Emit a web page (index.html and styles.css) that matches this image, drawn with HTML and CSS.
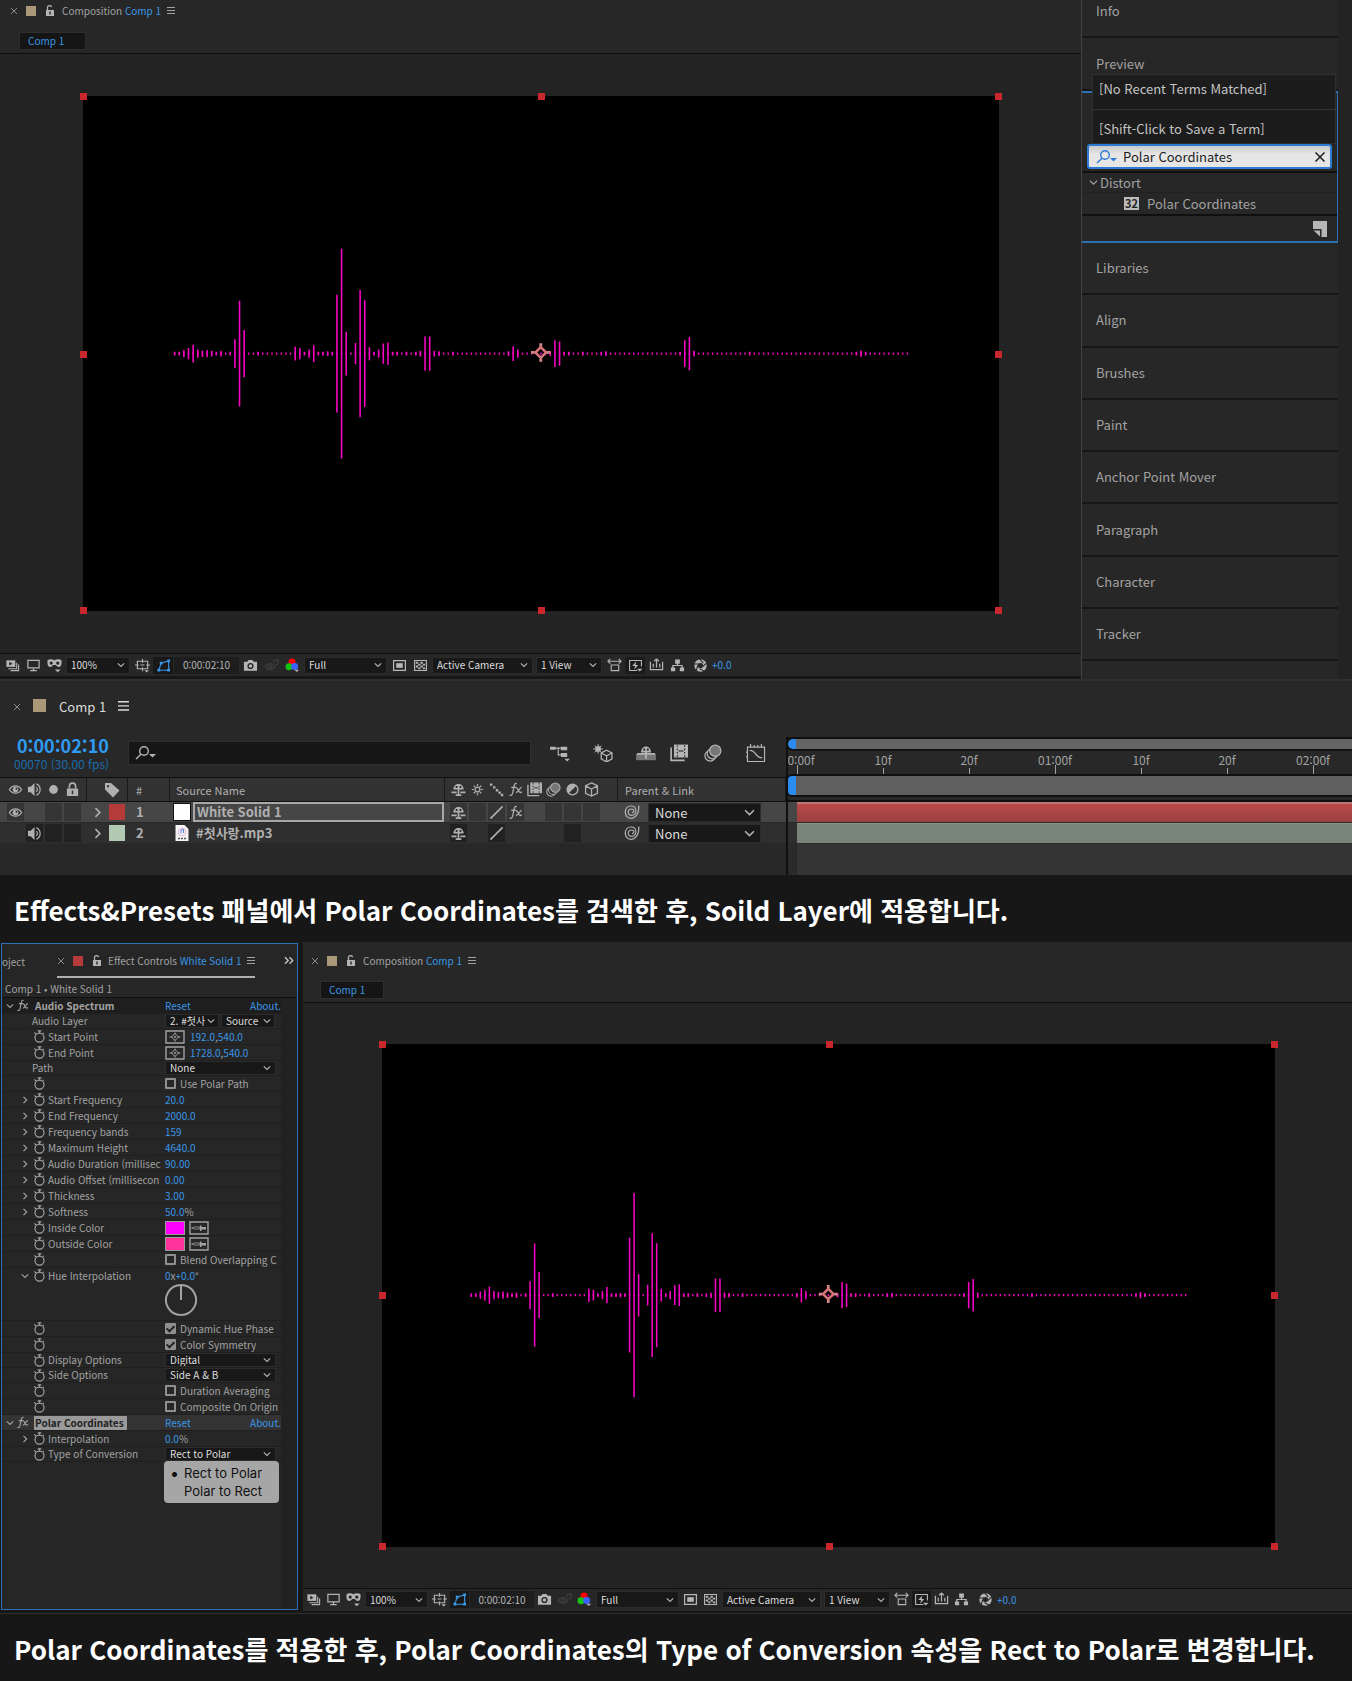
FILE: index.html
```html
<!DOCTYPE html>
<html lang="ko">
<head>
<meta charset="utf-8">
<meta name="viewport" content="width=device-width, initial-scale=1">
<title>Polar Coordinates</title>
<link rel="stylesheet" href="styles.css">
</head>
<body>
<svg class="sprite" aria-hidden="true">
  <symbol id="lock-open" viewBox="0 0 10 12"><path d="M2.500 5V3a2 2 0 0 1 4-.8" fill="none" stroke="currentColor" stroke-width="1.300"/><path fill="currentColor" fill-rule="evenodd" d="M1 5h8v6H1zM4.300 6.500v3h1.400v-3z"/></symbol>
  <symbol id="menu" viewBox="0 0 8 8"><path d="M0 .5h8M0 3.500h8M0 6.500h8" stroke="currentColor"/></symbol>
  <symbol id="close" viewBox="0 0 8 8"><path d="M1 1l6 6M7 1L1 7" stroke="currentColor" stroke-width="1"/></symbol>
  <symbol id="down" viewBox="0 0 8 8"><path d="M.8 2.300L4 5.500l3.200-3.200" fill="none" stroke="currentColor" stroke-width="1.100"/></symbol>
  <symbol id="right" viewBox="0 0 8 8"><path d="M2.500 .8L5.700 4 2.500 7.200" fill="none" stroke="currentColor" stroke-width="1.200"/></symbol>
  <symbol id="more" viewBox="0 0 10 8"><path d="M1 .8L4.200 4 1 7.200M5.500 .8L8.700 4 5.500 7.200" fill="none" stroke="currentColor" stroke-width="1.400"/></symbol>
  <symbol id="search" viewBox="0 0 22 16"><g fill="none" stroke="currentColor" stroke-width="1.400"><circle cx="9" cy="6" r="4.300"/><path d="M6 9.200L1 14"/></g><path d="M14 9h7l-3.500 3.600z" fill="currentColor"/></symbol>
  <symbol id="watch" viewBox="0 0 12 12"><circle cx="6" cy="7" r="4.200" fill="none" stroke="currentColor" stroke-width="1.100"/><path d="M4.300 .8h3.400M6 .8v2M1.200 2.200l1.600 1.600M10 2.600l-.8.8" stroke="currentColor" stroke-width="1.100"/></symbol>
  <symbol id="fx" viewBox="0 0 14 14"><path d="M8.200 1.600C6.600.9 6 2 5.700 3.600L4.400 10c-.4 2-1.200 2.800-2.900 2.200M3 5h4.600M7.500 5.200c1.800-.5 1.900 4.900 4 4.600.6 0 1-.3 1.300-.7M12.800 5c-1.800-.5-2.900 4.900-5.400 4.800" fill="none" stroke="currentColor" stroke-width="1.200"/></symbol>
  <symbol id="previews" viewBox="0 0 16 16"><path d="M1.500 2.500h9.500v7H1.500z" fill="currentColor"/><path d="M4.500 4l3.500 2-3.500 2z" fill="#232323"/><path d="M3.500 11.500h9V5M6 13.500h8.500V7" fill="none" stroke="currentColor" stroke-width="1.200"/></symbol>
  <symbol id="monitor" viewBox="0 0 16 16"><path d="M2 2.500h12v8H2zM8 10.500v2.500M4.500 13.500h7" fill="none" stroke="currentColor" stroke-width="1.300"/></symbol>
  <symbol id="mask" viewBox="0 0 16 16"><path d="M.8 2C3 1 6 1 8 2.500 10 1 13 1 15.200 2c.8 2 .3 5.500-1 7-1.400 1-3.600.6-4.700-1.500h-3C5.400 9.600 3.200 10 1.800 9 .5 7.500 0 4 .8 2z" fill="currentColor"/><circle cx="4.500" cy="5.400" r="1.700" fill="#232323"/><circle cx="11.500" cy="5.400" r="1.700" fill="#232323"/><path d="M8.500 12.300h6L11.500 15.300z" fill="currentColor"/></symbol>
  <symbol id="grid" viewBox="0 0 16 16"><path d="M2.500 3.500h11v8h-11zM8 1v4M8 7v1M8 10v4M0 7.500h4M12 7.500h4M6 7.500h4" fill="none" stroke="currentColor" stroke-width="1.200"/><path d="M10 13h5l-2.500 2.500z" fill="currentColor"/></symbol>
  <symbol id="shape" viewBox="0 0 16 16"><path d="M3 13L5.500 5.500 13.500 3v10z" fill="none" stroke="currentColor" stroke-width="1.200"/><path d="M1.500 11.500h3v3h-3zM4 4h3v3H4zM12 1.500h3v3h-3zM12 11.500h3v3h-3z" fill="currentColor"/></symbol>
  <symbol id="camera" viewBox="0 0 16 16"><path d="M1 4h3.500L6 2h4l1.500 2H15v9.500H1z" fill="currentColor"/><circle cx="8" cy="8.500" r="2.600" fill="none" stroke="#232323" stroke-width="1.400"/></symbol>
  <symbol id="show" viewBox="0 0 16 16"><g fill="none" stroke="currentColor" stroke-width="1.500"><path d="M1.500 9c2-4 8-4 10 0-2 4-8 4-10 0z"/><circle cx="6.500" cy="9" r="1.500"/><path d="M10 5l2-3h3v4l-2 2"/></g></symbol>
  <symbol id="rgb" viewBox="0 0 16 16"><circle cx="7.500" cy="4.200" r="3.700" fill="#f00"/><circle cx="4.300" cy="9.300" r="3.700" fill="#12c512"/><circle cx="10.300" cy="9" r="3.700" fill="#3b62ff"/><path d="M10 12.500h5L12.500 15z" fill="#b5b5b5"/></symbol>
  <symbol id="region" viewBox="0 0 16 16"><path d="M1.700 2.700h12.600v10.600H1.700z" fill="none" stroke="currentColor" stroke-width="1.300"/><path d="M4.500 5.500h7v5h-7z" fill="currentColor"/></symbol>
  <symbol id="alpha" viewBox="0 0 16 16"><path d="M1.700 2.700h12.600v10.600H1.700z" fill="none" stroke="currentColor" stroke-width="1.200"/><path d="M3 4h2.500v2H3zM8 4h2.500v2H8zM5.500 6H8v2H5.500zM10.500 6H13v2h-2.500zM3 8h2.500v2H3zM8 8h2.500v2H8zM5.500 10H8v2H5.500zM10.500 10H13v2h-2.500z" fill="currentColor"/></symbol>
  <symbol id="pixel" viewBox="0 0 16 16"><path d="M4.500 7.500h8v6h-8zM1 3.500h14M3.500 1L1 3.500 3.500 6M12.500 1L15 3.500 12.500 6" fill="none" stroke="currentColor" stroke-width="1.200"/></symbol>
  <symbol id="fast" viewBox="0 0 16 16"><path d="M10 13.300H1.700V2.700h12.600V9" fill="none" stroke="currentColor" stroke-width="1.200"/><path d="M9 3.500L4.500 8.500h3L6.500 12.500l4.500-5H8zM9.500 11.500h6L12.500 14.500z" fill="currentColor"/></symbol>
  <symbol id="tl" viewBox="0 0 16 16"><path d="M1.500 4v8.500h13V4M4.500 6v4M8 1v9M11.500 6v4M8 1L5.500 3.500M8 1l2.500 2.500" fill="none" stroke="currentColor" stroke-width="1.300"/></symbol>
  <symbol id="flow" viewBox="0 0 16 16"><path d="M5.500 1.500h5V6h-5zM1 10h4.500v4H1zM10.500 10H15v4h-4.500z" fill="currentColor"/><path d="M8 5v3M3 11V8h10v3" fill="none" stroke="currentColor" stroke-width="1.300"/></symbol>
  <symbol id="aperture" viewBox="0 0 16 16"><circle cx="8" cy="8" r="4.700" fill="none" stroke="currentColor" stroke-width="3.800"/><path d="M7 1l4 4.500M14.500 5.500l-4.500 4M12 14l-5-2.500M3.500 13.500L5 8M1 6.500h6" stroke="#232323" stroke-width="1.100"/></symbol>
  <symbol id="eye" viewBox="0 0 16 16"><path d="M1.500 8C4.500 2.700 11.500 2.700 14.500 8 11.500 13.300 4.500 13.300 1.500 8z" fill="none" stroke="currentColor" stroke-width="1.300"/><circle cx="8" cy="8" r="3" fill="currentColor"/><circle cx="9" cy="7.200" r="1" fill="#222"/></symbol>
  <symbol id="sound" viewBox="0 0 16 16"><path d="M1 5h3l4-4v14l-4-4H1z" fill="currentColor"/><path d="M10 5.500a3.500 3.500 0 0 1 0 5M10 2a6.500 6.500 0 0 1 0 12" fill="none" stroke="currentColor" stroke-width="1.300"/></symbol>
  <symbol id="dot" viewBox="0 0 16 16"><circle cx="8" cy="8" r="4.700" fill="currentColor"/></symbol>
  <symbol id="lock" viewBox="0 0 16 16"><path d="M4.700 7V4.500a3.300 3.300 0 0 1 6.600 0V7" fill="none" stroke="currentColor" stroke-width="1.700"/><path d="M2 7h12v8H2zM7.200 9v4h1.600V9z" fill="currentColor" fill-rule="evenodd"/></symbol>
  <symbol id="tag" viewBox="0 0 16 16"><path d="M1 1h6l8.500 7.500-6.500 7L1 7.500zM4 3a1.200 1.200 0 1 0 .1 0z" fill="currentColor" fill-rule="evenodd"/></symbol>
  <symbol id="shy" viewBox="0 0 16 16"><path d="M2.500 8C2.500 0 13.500 0 13.500 8z" fill="currentColor"/><path d="M5 4.200h2v2.200H5zM9 4.200h2v2.200H9z" fill="#2b2b2b"/><path d="M8 5v9M.5 11H6M10 11h5.500M5 14h6" stroke="currentColor" stroke-width="1.800"/></symbol>
  <symbol id="sun" viewBox="0 0 16 16"><circle cx="8" cy="8" r="2.500" fill="none" stroke="currentColor" stroke-width="1.300"/><path d="M8 2v2.500M8 11.500V14M2 8h2.500M11.500 8H14M4 4l1.500 1.500M10.500 10.500L12 12M12 4l-1.500 1.500M5.500 10.500L4 12" stroke="currentColor" stroke-width="1.300"/></symbol>
  <symbol id="quality" viewBox="0 0 16 16"><path d="M1 1.500h2.600v2.500H1zM4.300 4.500h2.600V7H4.300zM7.300 7.500h2.600V10H7.300zM10 10h2.600v2.500H10zM12.600 12.600h2.600v2.500h-2.600z" fill="currentColor"/></symbol>
  <symbol id="slash" viewBox="0 0 16 16"><path d="M1.500 14.500l13-13" stroke="currentColor" stroke-width="1.700"/></symbol>
  <symbol id="film" viewBox="0 0 16 16"><path d="M3.500 0.500H16V12H3.500z" fill="currentColor"/><path d="M6.500 1v10.500M13 1v10.500" stroke="#2b2b2b" stroke-dasharray="1.500 1.500"/><path d="M7.500 6.200h4.500" stroke="#2b2b2b"/><path d="M1 3v11.500h12" fill="none" stroke="currentColor" stroke-width="1.500"/></symbol>
  <symbol id="blur" viewBox="0 0 16 16"><g stroke="currentColor" stroke-width="1.100"><circle cx="5.500" cy="10.500" r="4.700" fill="#2b2b2b"/><circle cx="7.500" cy="8.500" r="4.700" fill="#2b2b2b"/><circle cx="10" cy="6" r="5" fill="#777"/></g></symbol>
  <symbol id="adjust" viewBox="0 0 16 16"><circle cx="8" cy="8" r="5.700" fill="none" stroke="currentColor" stroke-width="1.500"/><path d="M12.100 3.900A5.700 5.700 0 0 0 3.900 12.100z" fill="currentColor"/></symbol>
  <symbol id="cube" viewBox="0 0 16 16"><path d="M8 1l6.300 3v8L8 15l-6.300-3V4zM1.700 4.200L8 7.500l6.300-3.300M8 7.500V15" fill="none" stroke="currentColor" stroke-width="1.400"/></symbol>
  <symbol id="spiral" viewBox="0 0 16 16"><path d="M14.800 1.500c.5 8-3.300 12.800-8 12.800C-.5 14.300-.6 2 7 2c6.500 0 6.300 9.300.6 9.300-4.800 0-4.200-6.300 0-6.300 3.200 0 2.700 3.700.4 3.700" fill="none" stroke="currentColor" stroke-width="1.200"/></symbol>
  <symbol id="mini-flow" viewBox="0 0 22 20"><path d="M0 3h6v3.500H0zM12 3h7v4h-7zM12 10h7v4.500h-7zM16 16.500h6L19 19.500z" fill="currentColor"/><path d="M5 4.500h9M9 4.500V12h4" fill="none" stroke="currentColor" stroke-width="1.300"/></symbol>
  <symbol id="draft3d" viewBox="0 0 22 20"><path d="M15 7l6 3v6.500L15 20l-6-3.500V10zM9 10l6 3.200 6-3.200M15 13.200V20" fill="none" stroke="currentColor" stroke-width="1.400"/><circle cx="5.500" cy="5.500" r="3.200" fill="currentColor"/><path d="M5.500 0v11M0 5.500h11M1.700 1.700l7.600 7.600M9.300 1.700L1.700 9.300" stroke="currentColor"/></symbol>
  <symbol id="shy-all" viewBox="0 0 22 20"><path d="M0 11h22v7H0z" fill="#777"/><path d="M5.500 9.500C5.500 .5 16.500 .5 16.500 9.500z" fill="currentColor"/><path d="M8 5h2v2.500H8zM12 5h2v2.500h-2z" fill="#2b2b2b"/><path d="M11 8v8M1 11h20" stroke="currentColor" stroke-width="2"/></symbol>
  <symbol id="graph" viewBox="0 0 22 20"><path d="M1.500 3.500h19v16h-19zM5 3V0M9 3V1M13 3V1M17 3V0M0 9h2M0 14h2" fill="none" stroke="currentColor" stroke-width="1.300"/><path d="M4 7c8 0 5 8 14 8.500" fill="none" stroke="currentColor" stroke-width="1.500"/></symbol>
  <symbol id="target" viewBox="0 0 20 14"><path d="M1 1h18v12H1z" fill="none" stroke="currentColor" stroke-width="1.400"/><path d="M10 3.500L13.500 7 10 10.500 6.500 7zM10 2.500v2M10 9.500v2M4.500 7h3M12.500 7h3" fill="none" stroke="currentColor"/><circle cx="10" cy="7" r="1" fill="currentColor"/></symbol>
  <symbol id="dropper" viewBox="0 0 20 14"><path d="M1 1h18v12H1z" fill="none" stroke="currentColor" stroke-width="1.400"/><path d="M2.500 7L5 6h6v2H5z" fill="none" stroke="currentColor" stroke-width=".8"/><path d="M11 4.500h1.500V6H17v2.500h-4.500V10H11z" fill="currentColor"/></symbol>
  <symbol id="note" viewBox="0 0 16 16"><path d="M1 0h14v16h-5.500v-8H1z" fill="currentColor"/><path d="M1.500 9.500h6.500v6z" fill="currentColor"/></symbol>
  <symbol id="mp3" viewBox="0 0 14 16"><path d="M.5 0h9L13.500 4v12H.5z" fill="#f4f4f4"/><circle cx="7" cy="7" r="3.800" fill="none" stroke="#e3a3d8" stroke-width=".8"/><path d="M6 8.500V5l2.500-.5v3.500" fill="none" stroke="#5b7fe0"/><path d="M3 13.500h8" stroke="#555" stroke-width="1.500" stroke-dasharray="2 1"/></symbol>
  <symbol id="spectrum" viewBox="0 0 1975 1111">
    <g transform="translate(197.500 555.500)" fill="none" stroke="#f704c4">
      <path d="M-1.500 0H1582" stroke-width="5" stroke-dasharray="3 7"/>
      <path stroke-width="3.400" d="M0-4V4M10-4V4M20-8V8M30-12V12M40-19V19M50-9V9M60-7V7M70-8V8M80-6V6M90-4V4M100-6V6M120-4V4M130-31V31M140-114V114M150-51V51M180-4V4M260-15V15M270-12V12M280-4V4M290-9V9M300-18V18M310-4V4M320-4V4M330-5V5M340-4V4M350-127V127M360-226V226M370-47V47M390-23V23M400-137V137M410-115V115M420-14V14M430-4V4M440-9V9M450-22V22M460-24V24M470-4V4M480-4V4M500-4V4M520-4V4M530-6V6M540-37V37M550-37V37M560-6V6M570-5V5M600-4V4M720-5V5M730-16V16M740-9V9M810-5V5M820-29V29M830-26V26M840-4V4M850-4V4M880-4V4M920-4V4M930-5V5M1090-4V4M1100-29V29M1110-36V36M1120-6V6M1240-4V4M1470-4V4M1480-7V7M1490-4V4"/>
    </g>
    <g transform="translate(987 553)" fill="none" stroke="#d8747a"><path d="M0-11.500L11.500 0 0 11.500-11.500 0z" stroke-width="5.500"/><path d="M0-13v-7M0 13v7M-13 0h-8M13 0h8" stroke="#cf8a88" stroke-width="6"/></g>
  </symbol>
</svg>

<div class="workspace">
  <section class="comp">
    <header class="comp-head">
      <div class="tabline"><svg class="i8 dim"><use href="#close"/></svg><span class="chip sand"></span><svg class="i-lock"><use href="#lock-open"/></svg><h2>Composition <b>Comp 1</b></h2><svg class="i8"><use href="#menu"/></svg></div>
      <a class="crumb" href="#comp">Comp 1</a>
    </header>
    <div class="viewer"><div class="canvas"><svg viewBox="0 0 1975 1111" role="img" aria-label="Audio spectrum"><use href="#spectrum"/></svg><i class="h tl"></i><i class="h tc"></i><i class="h tr"></i><i class="h ml"></i><i class="h mr"></i><i class="h bl"></i><i class="h bc"></i><i class="h br"></i></div></div>
    <div class="toolbar">
      <button aria-label="Always preview"><svg><use href="#previews"/></svg></button><button aria-label="Primary viewer"><svg><use href="#monitor"/></svg></button><button aria-label="Mask view"><svg><use href="#mask"/></svg></button>
      <span class="sel zoom"><select aria-label="Magnification"><option>100%</option></select><svg><use href="#down"/></svg></span>
      <button aria-label="Grid and guides"><svg><use href="#grid"/></svg></button><button class="on" aria-label="Mask and shape path"><svg><use href="#shape"/></svg></button>
      <button class="time">0:00:02:10</button>
      <button aria-label="Take snapshot"><svg><use href="#camera"/></svg></button><button class="off" aria-label="Show snapshot"><svg><use href="#show"/></svg></button><button aria-label="Channels"><svg><use href="#rgb"/></svg></button>
      <span class="sel res"><select aria-label="Resolution"><option>Full</option></select><svg><use href="#down"/></svg></span>
      <button aria-label="Region of interest"><svg><use href="#region"/></svg></button><button aria-label="Transparency grid"><svg><use href="#alpha"/></svg></button>
      <span class="sel cam"><select aria-label="3D view"><option>Active Camera</option></select><svg><use href="#down"/></svg></span>
      <span class="sel views"><select aria-label="View layout"><option>1 View</option></select><svg><use href="#down"/></svg></span>
      <button aria-label="Pixel aspect"><svg><use href="#pixel"/></svg></button><button class="shade" aria-label="Fast previews"><svg><use href="#fast"/></svg></button><button aria-label="Timeline"><svg><use href="#tl"/></svg></button><button aria-label="Flowchart"><svg><use href="#flow"/></svg></button>
      <button class="expo" aria-label="Reset exposure"><svg><use href="#aperture"/></svg></button><button class="val">+0.0</button>
    </div>
  </section>

  <aside class="side">
    <h3 class="s-info">Info</h3>
    <h3 class="s-preview">Preview</h3>
    <div class="effects">
      <ul class="recent"><li>[No Recent Terms Matched]</li><li>[Shift-Click to Save a Term]</li></ul>
      <div class="find"><svg class="i-search"><use href="#search"/></svg><input aria-label="Search effects" value="Polar Coordinates"><button aria-label="Clear"><svg><use href="#close"/></svg></button></div>
      <div class="tree">
        <div class="group"><svg><use href="#down"/></svg>Distort</div>
        <div class="leaf"><span class="bits">32</span>Polar Coordinates</div>
      </div>
      <div class="foot"><button aria-label="New preset"><svg><use href="#note"/></svg></button></div>
    </div>
    <div class="panels"><h3>Libraries</h3><h3>Align</h3><h3>Brushes</h3><h3>Paint</h3><h3>Anchor Point Mover</h3><h3>Paragraph</h3><h3>Character</h3><h3>Tracker</h3></div>
  </aside>
</div>

<section class="timeline">
  <div class="tl-tab"><svg class="i8 dim"><use href="#close"/></svg><span class="chip sand"></span><h2>Comp 1</h2><svg class="i-menu"><use href="#menu"/></svg></div>
  <div class="tl-left">
    <div class="tl-ctrl">
      <div class="clock"><strong>0:00:02:10</strong><span>00070 (30.00 fps)</span></div>
      <label class="tl-find"><svg class="i-search"><use href="#search"/></svg><input aria-label="Search layers"></label>
      <div class="tl-tools">
        <button aria-label="Mini-flowchart"><svg><use href="#mini-flow"/></svg></button><button aria-label="Draft 3D"><svg><use href="#draft3d"/></svg></button><button aria-label="Hide shy layers"><svg><use href="#shy-all"/></svg></button><button class="slim" aria-label="Frame blending"><svg><use href="#film"/></svg></button><button aria-label="Motion blur"><svg><use href="#blur"/></svg></button><button aria-label="Graph editor"><svg><use href="#graph"/></svg></button>
      </div>
    </div>
    <table class="layers">
      <colgroup><col class="c-av"><col class="c-tag"><col class="c-num"><col class="c-name"><col class="c-sw"><col class="c-par"></colgroup>
      <thead><tr>
        <th><div class="cells av"><i><svg><use href="#eye"/></svg></i><i><svg><use href="#sound"/></svg></i><i><svg><use href="#dot"/></svg></i><i><svg><use href="#lock"/></svg></i></div></th>
        <th><div class="tagcell"><svg><use href="#tag"/></svg></div></th>
        <th class="num">#</th>
        <th>Source Name</th>
        <th><div class="cells sw"><i><svg><use href="#shy"/></svg></i><i><svg><use href="#sun"/></svg></i><i><svg><use href="#quality"/></svg></i><i><svg><use href="#fx"/></svg></i><i><svg><use href="#film"/></svg></i><i><svg><use href="#blur"/></svg></i><i><svg><use href="#adjust"/></svg></i><i><svg><use href="#cube"/></svg></i></div></th>
        <th class="par">Parent &amp; Link</th>
      </tr></thead>
      <tbody>
        <tr class="picked">
          <td><div class="cells av"><i class="d"><svg><use href="#eye"/></svg></i><i></i><i class="d"></i><i class="d"></i></div></td>
          <td><div class="tagcell"><svg class="arrow"><use href="#right"/></svg><span class="swatch red"></span></div></td>
          <td class="num">1</td>
          <td><div class="name"><span class="solid"></span><span class="edit">White Solid 1</span></div></td>
          <td><div class="cells sw"><i class="d"><svg><use href="#shy"/></svg></i><i class="d"></i><i class="d"><svg><use href="#slash"/></svg></i><i class="d"><svg><use href="#fx"/></svg></i><i></i><i class="d"></i><i class="d"></i><i class="d"></i></div></td>
          <td><div class="link"><svg><use href="#spiral"/></svg><span class="sel"><select aria-label="Parent of layer 1"><option>None</option></select><svg><use href="#down"/></svg></span></div></td>
        </tr>
        <tr>
          <td><div class="cells av"><i></i><i class="d"><svg><use href="#sound"/></svg></i><i class="d"></i><i class="d"></i></div></td>
          <td><div class="tagcell"><svg class="arrow"><use href="#right"/></svg><span class="swatch mint"></span></div></td>
          <td class="num">2</td>
          <td><div class="name"><svg><use href="#mp3"/></svg><span>#첫사랑.mp3</span></div></td>
          <td><div class="cells sw"><i class="d"><svg><use href="#shy"/></svg></i><i></i><i class="d"><svg><use href="#slash"/></svg></i><i></i><i></i><i></i><i class="d"></i><i></i></div></td>
          <td><div class="link"><svg><use href="#spiral"/></svg><span class="sel"><select aria-label="Parent of layer 2"><option>None</option></select><svg><use href="#down"/></svg></span></div></td>
        </tr>
      </tbody>
    </table>
  </div>
  <div class="tl-right">
    <div class="bar nav"></div>
    <ol class="ruler"><li class="long start">0:00f</li><li>10f</li><li>20f</li><li class="long">01:00f</li><li>10f</li><li>20f</li><li class="long">02:00f</li></ol>
    <div class="bar work"></div>
    <div class="track first"><span class="clip red"></span></div>
    <div class="track"><span class="clip mint"></span></div>
    <div class="track rest"><span></span></div>
  </div>
</section>

<p class="caption">Effects&amp;Presets 패널에서 Polar Coordinates를 검색한 후, Soild Layer에 적용합니다.</p>

<div class="workspace lower">
  <section class="fx-panel">
    <div class="fx-tabs"><h2 class="cut">oject</h2><div class="fx-tab"><svg class="i8 dim"><use href="#close"/></svg><span class="chip red"></span><svg class="i-lock"><use href="#lock-open"/></svg><h2>Effect Controls <b>White Solid 1</b></h2><svg class="i8"><use href="#menu"/></svg></div><svg class="more"><use href="#more"/></svg></div>
    <div class="fx-path">Comp 1 • White Solid 1</div>
    <div class="fx-list">
      <div class="row head"><svg class="fold"><use href="#down"/></svg><svg class="fxi"><use href="#fx"/></svg><h3>Audio Spectrum</h3><div class="v"><a href="#reset">Reset</a><a class="about" href="#about">About.</a></div></div>
      <div class="row drop plain"><label for="al">Audio Layer</label><div class="v"><span class="sel half"><select id="al"><option>2. #첫사</option></select><svg><use href="#down"/></svg></span><span class="sel half"><select aria-label="Audio source"><option>Source</option></select><svg><use href="#down"/></svg></span></div></div>
      <div class="row"><svg class="watch"><use href="#watch"/></svg><span class="l">Start Point</span><div class="v"><svg class="box"><use href="#target"/></svg><a href="#v">192.0</a>,<a href="#v">540.0</a></div></div>
      <div class="row"><svg class="watch"><use href="#watch"/></svg><span class="l">End Point</span><div class="v"><svg class="box"><use href="#target"/></svg><a href="#v">1728.0</a>,<a href="#v">540.0</a></div></div>
      <div class="row drop plain"><label for="pa">Path</label><div class="v"><span class="sel"><select id="pa"><option>None</option></select><svg><use href="#down"/></svg></span></div></div>
      <div class="row"><svg class="watch"><use href="#watch"/></svg><label class="v"><input type="checkbox">Use Polar Path</label></div>
      <div class="row"><svg class="fold"><use href="#right"/></svg><svg class="watch"><use href="#watch"/></svg><span class="l">Start Frequency</span><div class="v"><a href="#v">20.0</a></div></div>
      <div class="row"><svg class="fold"><use href="#right"/></svg><svg class="watch"><use href="#watch"/></svg><span class="l">End Frequency</span><div class="v"><a href="#v">2000.0</a></div></div>
      <div class="row"><svg class="fold"><use href="#right"/></svg><svg class="watch"><use href="#watch"/></svg><span class="l">Frequency bands</span><div class="v"><a href="#v">159</a></div></div>
      <div class="row"><svg class="fold"><use href="#right"/></svg><svg class="watch"><use href="#watch"/></svg><span class="l">Maximum Height</span><div class="v"><a href="#v">4640.0</a></div></div>
      <div class="row"><svg class="fold"><use href="#right"/></svg><svg class="watch"><use href="#watch"/></svg><span class="l">Audio Duration (millisec</span><div class="v"><a href="#v">90.00</a></div></div>
      <div class="row"><svg class="fold"><use href="#right"/></svg><svg class="watch"><use href="#watch"/></svg><span class="l">Audio Offset (millisecon</span><div class="v"><a href="#v">0.00</a></div></div>
      <div class="row"><svg class="fold"><use href="#right"/></svg><svg class="watch"><use href="#watch"/></svg><span class="l">Thickness</span><div class="v"><a href="#v">3.00</a></div></div>
      <div class="row"><svg class="fold"><use href="#right"/></svg><svg class="watch"><use href="#watch"/></svg><span class="l">Softness</span><div class="v"><a href="#v">50.0</a>%</div></div>
      <div class="row"><svg class="watch"><use href="#watch"/></svg><span class="l">Inside Color</span><div class="v"><span class="color magenta"></span><svg class="box"><use href="#dropper"/></svg></div></div>
      <div class="row"><svg class="watch"><use href="#watch"/></svg><span class="l">Outside Color</span><div class="v"><span class="color pink"></span><svg class="box"><use href="#dropper"/></svg></div></div>
      <div class="row"><svg class="watch"><use href="#watch"/></svg><label class="v"><input type="checkbox">Blend Overlapping C</label></div>
      <div class="row open"><svg class="fold"><use href="#down"/></svg><svg class="watch"><use href="#watch"/></svg><span class="l">Hue Interpolation</span><div class="v"><a href="#v">0</a>x<a href="#v">+0.0</a>°</div></div>
      <div class="row dial"><div class="v"><svg viewBox="0 0 32 32"><path d="M16 1a15 15 0 1 0 .01 0zM16 2v14" fill="none" stroke="currentColor" stroke-width="2"/></svg></div></div>
      <div class="row"><svg class="watch"><use href="#watch"/></svg><label class="v"><input type="checkbox" checked>Dynamic Hue Phase</label></div>
      <div class="row"><svg class="watch"><use href="#watch"/></svg><label class="v"><input type="checkbox" checked>Color Symmetry</label></div>
      <div class="row drop"><svg class="watch"><use href="#watch"/></svg><label class="l" for="do">Display Options</label><div class="v"><span class="sel"><select id="do"><option>Digital</option></select><svg><use href="#down"/></svg></span></div></div>
      <div class="row drop"><svg class="watch"><use href="#watch"/></svg><label class="l" for="so">Side Options</label><div class="v"><span class="sel"><select id="so"><option>Side A &amp; B</option></select><svg><use href="#down"/></svg></span></div></div>
      <div class="row"><svg class="watch"><use href="#watch"/></svg><label class="v"><input type="checkbox">Duration Averaging</label></div>
      <div class="row"><svg class="watch"><use href="#watch"/></svg><label class="v"><input type="checkbox">Composite On Origin</label></div>
      <div class="row head picked"><svg class="fold"><use href="#down"/></svg><svg class="fxi"><use href="#fx"/></svg><h3>Polar Coordinates</h3><div class="v"><a href="#reset">Reset</a><a class="about" href="#about">About.</a></div></div>
      <div class="row"><svg class="fold"><use href="#right"/></svg><svg class="watch"><use href="#watch"/></svg><span class="l">Interpolation</span><div class="v"><a href="#v">0.0</a>%</div></div>
      <div class="row drop menu-host"><svg class="watch"><use href="#watch"/></svg><label class="l" for="tc">Type of Conversion</label><div class="v"><span class="sel"><select id="tc"><option>Rect to Polar</option></select><svg><use href="#down"/></svg></span></div>
        <ul class="menu"><li class="cur">Rect to Polar</li><li>Polar to Rect</li></ul></div>
    </div>
  </section>

  <section class="comp small">
    <header class="comp-head">
      <div class="tabline"><svg class="i8 dim"><use href="#close"/></svg><span class="chip sand"></span><svg class="i-lock"><use href="#lock-open"/></svg><h2>Composition <b>Comp 1</b></h2><svg class="i8"><use href="#menu"/></svg></div>
      <a class="crumb" href="#comp">Comp 1</a>
    </header>
    <div class="viewer"><div class="canvas"><svg viewBox="0 0 1975 1111" role="img" aria-label="Audio spectrum"><use href="#spectrum"/></svg><i class="h tl"></i><i class="h tc"></i><i class="h tr"></i><i class="h ml"></i><i class="h mr"></i><i class="h bl"></i><i class="h bc"></i><i class="h br"></i></div></div>
    <div class="toolbar">
      <button aria-label="Always preview"><svg><use href="#previews"/></svg></button><button aria-label="Primary viewer"><svg><use href="#monitor"/></svg></button><button aria-label="Mask view"><svg><use href="#mask"/></svg></button>
      <span class="sel zoom"><select aria-label="Magnification"><option>100%</option></select><svg><use href="#down"/></svg></span>
      <button aria-label="Grid and guides"><svg><use href="#grid"/></svg></button><button class="on" aria-label="Mask and shape path"><svg><use href="#shape"/></svg></button>
      <button class="time">0:00:02:10</button>
      <button aria-label="Take snapshot"><svg><use href="#camera"/></svg></button><button class="off" aria-label="Show snapshot"><svg><use href="#show"/></svg></button><button aria-label="Channels"><svg><use href="#rgb"/></svg></button>
      <span class="sel res"><select aria-label="Resolution"><option>Full</option></select><svg><use href="#down"/></svg></span>
      <button aria-label="Region of interest"><svg><use href="#region"/></svg></button><button aria-label="Transparency grid"><svg><use href="#alpha"/></svg></button>
      <span class="sel cam"><select aria-label="3D view"><option>Active Camera</option></select><svg><use href="#down"/></svg></span>
      <span class="sel views"><select aria-label="View layout"><option>1 View</option></select><svg><use href="#down"/></svg></span>
      <button aria-label="Pixel aspect"><svg><use href="#pixel"/></svg></button><button class="shade" aria-label="Fast previews"><svg><use href="#fast"/></svg></button><button aria-label="Timeline"><svg><use href="#tl"/></svg></button><button aria-label="Flowchart"><svg><use href="#flow"/></svg></button>
      <button class="expo" aria-label="Reset exposure"><svg><use href="#aperture"/></svg></button><button class="val">+0.0</button>
    </div>
  </section>
</div>

<p class="caption last">Polar Coordinates를 적용한 후, Polar Coordinates의 Type of Conversion 속성을 Rect to Polar로 변경합니다.</p>
</body>
</html>
```
FILE: styles.css
```css
* { box-sizing: border-box; }

:root {
  --panel: #272727;
  --view: #232323;
  --line: #0f0f0f;
  --field: #181818;
  --text: #a2a2a2;
  --bright: #dcdcdc;
  --blue: #3a97e6;
  --focus: #2c6fb3;
}

body {
  margin: 0;
  background: #171717;
  color: var(--text);
  font: 10px/14px "Noto Sans CJK KR", "Noto Sans", sans-serif;
}

h2, h3, p, ul, ol { margin: 0; padding: 0; list-style: none; font: inherit; }
a { color: var(--blue); text-decoration: none; }
button, input, select { font: inherit; color: inherit; border: 0; padding: 0; margin: 0; background: none; outline: 0; }
select { appearance: none; width: 100%; }
svg { display: block; flex: none; }
.sprite { position: absolute; width: 0; height: 0; }

.i8 { width: 8px; height: 8px; }
.dim { color: #8a8a8a; }
.i-lock { width: 10px; height: 12px; color: #b4b4b4; }
.i-search { width: 22px; height: 16px; }
.i-menu { width: 11px; height: 11px; }
.chip { width: 10px; height: 10px; flex: none; }
.sand { background: #ab9878; }
.red { background: #b53a3a; }
.mint { background: #b3c9b4; }

/* drop-down: select and chevron share one grid cell */
.sel { display: grid; align-items: center; background: var(--field); border: 1px solid #2c2c2c; color: var(--bright); }
.sel > * { grid-area: 1 / 1; }
.sel > svg { justify-self: end; width: 8px; height: 8px; margin-right: 4px; pointer-events: none; color: #b5b5b5; }
.sel > select { padding: 0 14px 0 4px; }

/* workspace */
.workspace { display: flex; background: var(--view); }
.comp { flex: 1; min-width: 0; background: var(--view); border-bottom: 3px solid #171717; }
.comp-head { background: var(--panel); border-bottom: 1px solid var(--line); padding: 0 0 4px 10px; }
.tabline { display: flex; align-items: center; height: 22px; margin-bottom: 11px; }
.tabline .chip { margin: 0 9px 0 8px; }
.tabline .i-lock { margin-right: 7px; }
.tabline h2 { margin-right: 6px; }
h2 b { font-weight: inherit; color: var(--blue); }
.crumb { display: block; width: 65px; height: 16px; margin-left: 10px; padding-left: 8px; background: #151515; outline: 1px solid #2e2e2e; line-height: 16px; }
.viewer { padding: 42px 82px 42px 83px; }
.canvas { position: relative; background: #000; }
.canvas svg { width: 100%; height: auto; }
.h { position: absolute; width: 7px; height: 7px; margin: -3px; background: #c8272d; }
.tl, .tc, .tr { top: 0; }
.ml, .mr { top: 50%; }
.bl, .bc, .br { bottom: 0; }
.tl, .ml, .bl { left: 0; }
.tc, .bc { left: 50%; }
.tr, .mr, .br { right: 0; }

.toolbar { display: flex; align-items: center; gap: 1px; height: 23px; padding: 0 2px; background: var(--panel); border-top: 1px solid var(--line); color: #b5b5b5; }
.toolbar button { display: grid; place-items: center; width: 20px; height: 17px; }
.toolbar button svg { width: 15px; height: 15px; }
.toolbar .on { background: var(--field); color: var(--blue); }
.toolbar .shade { background: #1b1b1b; }
.toolbar .off { color: #3c3c3c; }
.toolbar .time { width: 65px; background: #1d1d1d; }
.toolbar .sel { height: 17px; margin: 0 1px; flex: none; }
.toolbar .zoom { width: 64px; }
.toolbar .res { width: 83px; }
.toolbar .cam { width: 101px; }
.toolbar .views { width: 66px; }
.toolbar .expo { margin-left: 2px; }
.toolbar .val { width: auto; margin-left: 1px; color: var(--blue); }

/* right-hand panel stack */
.side { display: flex; flex-direction: column; flex: none; width: 257px; margin-right: 14px; background: var(--panel); border-left: 1px solid #444; font-size: 13px; line-height: 20px; }
.side h3 { border-bottom: 2px solid #161616; padding-left: 14px; }
.side .s-info { height: 38px; padding-top: 1px; }
.side .s-preview { height: 53px; padding-top: 16px; }
.effects { position: relative; padding-top: 51px; border: solid var(--focus); border-width: 2px 1px 2px 0; }
.recent { position: absolute; left: 10px; right: 1px; top: -19px; height: 70px; background: #1c1c1c; border: 1px solid #303030; color: #c4c4c4; }
.recent li { height: 34px; padding: 4px 6px; }
.recent li + li { border-top: 1px solid #333; padding-top: 9px; }
.find { display: flex; align-items: center; height: 25px; margin: 0 5px; padding: 0 4px 0 7px; background: linear-gradient(#c9c9c9, #e6e6e6 40%); border: 2px solid #2c7cd6; border-radius: 3px; color: #1c1c1c; }
.find .i-search { color: #2c7cd6; }
.find input { flex: 1; min-width: 0; margin-left: 5px; }
.find button svg { width: 12px; height: 12px; }
.tree { margin-top: 2px; border: solid #101010; border-width: 2px 0; }
.group { display: flex; align-items: center; gap: 2px; height: 20px; padding-left: 7px; border-bottom: 1px solid #222; }
.group svg { width: 9px; height: 9px; }
.leaf { display: flex; align-items: center; height: 21px; padding-left: 42px; }
.bits { width: 15px; height: 13px; margin-right: 8px; background: #bcbcbc; color: #222; font-size: 11px; font-weight: 700; line-height: 12px; text-align: center; }
.foot { display: flex; justify-content: flex-end; align-items: center; height: 25px; padding-right: 9px; }
.foot svg { width: 16px; height: 16px; color: #b5b5b5; }
.panels { flex: 1; display: flex; flex-direction: column; padding-bottom: 18px; }
.panels h3 { flex: 1; display: flex; align-items: center; }

/* timeline */
.timeline { display: grid; grid-template-columns: 786px 1fr; background: #282828; border-top: 2px solid #303030; }
.tl-tab { grid-column: 1 / -1; display: flex; align-items: center; height: 51px; padding-left: 13px; color: var(--bright); font-size: 13px; line-height: 20px; }
.tl-tab .chip { width: 13px; height: 13px; margin: 0 13px 3px 12px; }
.tl-tab h2 { margin-right: 12px; }
.tl-ctrl { display: flex; align-items: center; height: 45px; padding-bottom: 3px; }
.clock { display: flex; flex-direction: column; width: 128px; padding-left: 14px; line-height: 16px; font-size: 12px; color: #1a6bab; }
.clock strong { padding-left: 3px; font-size: 18px; line-height: 22px; color: #2f9bf2; }
.tl-find { display: flex; align-items: center; flex: 1; height: 24px; background: #161616; border: 1px solid #2e2e2e; padding-left: 6px; color: #b5b5b5; }
.tl-find input { flex: 1; }
.tl-tools { display: flex; margin: 0 9px 0 7px; color: #b5b5b5; }
.tl-tools button { display: grid; place-items: center; width: 43px; }
.tl-tools .slim { width: 24px; }
.tl-tools svg { width: 22px; height: 18px; }

.layers { width: 100%; table-layout: fixed; border-collapse: collapse; color: #b0b0b0; font-size: 13px; line-height: 18px; }
.layers th, .layers td { padding: 0; text-align: left; font-weight: 400; }
.c-av { width: 87px; }
.c-tag { width: 41px; }
.c-num { width: 42px; }
.c-name { width: 275px; }
.c-sw { width: 173px; }
.layers th { height: 24px; background: #323232; border: solid var(--line); border-width: 1px 0; font-size: 11px; box-shadow: inset -1px 0 #1a1a1a; }
.layers th:nth-child(4) { padding-left: 6px; }
.layers th.par { padding-left: 7px; }
.layers td { height: 21px; background: #2f2f2f; border-bottom: 1px solid #292929; font-weight: 700; }
.layers .picked td { background: #464646; }
.layers td.num, .layers th.num { padding-left: 8px; }
.cells { display: flex; gap: 2px; }
.cells i { display: grid; place-items: center; width: 17px; height: 18px; }
.cells svg { width: 15px; height: 15px; }
.av { padding-left: 7px; }
.sw { padding-left: 5px; }
.cells .d { background: #212121; }
.picked .cells .d { background: #353535; }
.tagcell { display: flex; align-items: center; justify-content: flex-end; padding-right: 3px; }
th .tagcell { padding-right: 8px; }
.tagcell svg { width: 16px; height: 16px; }
.tagcell .arrow { width: 11px; height: 11px; margin-right: 6px; }
.swatch { width: 16px; height: 16px; }
.name { display: flex; align-items: center; gap: 3px; padding-left: 4px; }
.solid { width: 16px; height: 16px; background: #fff; outline: 1px solid #111; }
.name svg { width: 14px; height: 16px; margin: 0 4px 0 1px; }
.edit { flex: 1; height: 20px; margin-right: 1px; padding-left: 2px; border: 2px solid #a8a8a8; line-height: 16px; }
.link { display: flex; align-items: center; gap: 8px; padding-left: 6px; }
.link > svg { width: 16px; height: 16px; }
.link .sel { width: 113px; height: 19px; font-weight: 400; }
.link .sel > svg { width: 11px; height: 11px; margin-right: 5px; }
.link .sel > select { padding-left: 6px; }

.tl-right { display: flex; flex-direction: column; margin-top: 5px; border: solid var(--line); border-width: 2px 0 0 2px; overflow: hidden; }
.bar { flex: none; background: #656565; border-left: 8px solid #2b8cee; border-radius: 7px 0 0 7px; box-shadow: 0 0 0 2px #111; }
.nav { height: 10px; }
.ruler { display: flex; flex: none; height: 27px; margin-left: -34px; font-size: 12px; line-height: 16px; }
.ruler li { flex: none; width: 86px; padding-top: 3px; text-align: center; background: linear-gradient(#a0a0a0, #a0a0a0) 50% 19px / 1px 6px no-repeat; }
.ruler .long { background-position-y: 16px; background-size: 1px 9px; }
.ruler .start { padding-left: 8px; }
.work { height: 19px; border-radius: 4px 0 0 4px; background: #5f5f5f; }
.track { display: flex; flex: none; height: 21px; padding-left: 9px; background: #2f2f2f; border-bottom: 1px solid #292929; }
.track.first { margin-top: 5px; height: 23px; border-top: 2px solid var(--line); background: #464646; }
.clip { flex: 1; }
.clip.red { background: linear-gradient(#b94a49, #9a4141); border-top: 2px solid #bd7574; }
.clip.mint { background: #7a857a; border-top: 1px solid #8a9589; }
.track.rest { flex: 1; min-height: 31px; background: #2a2a2a; border: 0; }
.rest span { flex: 1; background: #343434; }

/* captions */
.caption { padding: 15px 14px 0; height: 67px; background: #171717; color: #fff; font-size: 26px; font-weight: 700; line-height: 40px; white-space: nowrap; }

/* effect controls */
.lower { background: #171717; border-top: 1px solid #1d1d1d; border-bottom: 1px solid #2e2e2e; }
.fx-panel { flex: none; width: 297px; margin: 0 5px 3px 1px; background: #262626; border: 1px solid var(--focus); display: flex; flex-direction: column; }
.fx-tabs { display: flex; align-items: flex-start; height: 36px; }
.fx-tabs .cut { width: 55px; line-height: 35px; }
.fx-tab { display: flex; align-items: center; height: 34px; padding-top: 1px; border-bottom: 2px solid #b0b0b0; }
.fx-tab .chip { margin: 0 9px 0 8px; }
.fx-tab .i-lock { margin-right: 6px; }
.fx-tab h2 { margin-right: 5px; white-space: nowrap; }
.more { width: 10px; height: 9px; margin: 12px 3px 0 auto; color: #c4c4c4; }
.fx-path { height: 18px; padding-left: 3px; line-height: 18px; border-bottom: 1px solid var(--line); }
.fx-list { flex: 1; margin-right: 16px; box-shadow: 16px 0 #222; }
.row { display: grid; grid-template-columns: 29px 16px 118px 1fr; align-items: center; height: 16px; border-bottom: 1px solid #1f1f1f; white-space: nowrap; }
.row.drop { height: 15px; }
.row .fold { grid-column: 1; grid-row: 1; justify-self: end; width: 8px; height: 8px; margin-right: 2px; }
.row .watch { grid-column: 2; grid-row: 1; width: 13px; height: 13px; justify-self: center; }
.row .l { grid-column: 3; grid-row: 1; padding-left: 1px; }
.plain > label { grid-column: 2 / 4; grid-row: 1; padding-left: 1px; }
.row .v { grid-column: 4; grid-row: 1; display: flex; align-items: center; min-width: 0; }
.row.head { grid-template-columns: 14px 18px 131px 1fr; background: #1e1e1e; }
.head.picked { background: #333; }
.head h3 { justify-self: start; padding: 0 3px 0 1px; font-weight: 700; }
.picked h3 { background: #9a9a9a; color: #222; }
.row .fxi { width: 13px; height: 13px; }
.about { margin-left: auto; }
.v .sel { flex: 1; height: 14px; margin-right: 5px; }
.v .sel > select { line-height: 12px; height: 12px; }
.v .half { flex: none; width: 54px; margin-right: 2px; }
.v .half > select { padding-right: 9px; }
.v .half > svg { margin-right: 3px; }
.v .box { width: 20px; height: 14px; margin-right: 5px; }
.color { width: 20px; height: 14px; margin-right: 4px; border: 1px solid #999; }
.magenta { background: #f0f; }
.pink { background: #ff3399; }
.v input { appearance: none; width: 11px; height: 11px; margin-right: 4px; border: 2px solid #8f8f8f; border-radius: 1px; }
.v input:checked { background: #8f8f8f; display: grid; place-items: center; }
.v input:checked::before { content: ""; width: 3px; height: 6px; margin-top: -2px; border: solid #222; border-width: 0 2px 2px 0; transform: rotate(45deg); }
.row.open { border-bottom-color: transparent; }
.row.dial { height: 37px; }
.dial svg { width: 32px; height: 32px; margin-bottom: 4px; }
.menu-host { position: relative; }
.menu { position: absolute; left: 162px; top: 14px; width: 115px; padding: 3px 0; background: #a6a6a6; border-radius: 4px; color: #111; font: 13px/18px "Inter", "Liberation Sans", sans-serif; z-index: 1; }
.menu li { padding-left: 20px; }
.menu .cur::before { content: "•"; float: left; margin-left: -14px; font-size: 16px; }

/* second composition panel */
.small { border-bottom-width: 2px; }
.small .comp-head { padding-top: 8px; margin-top: -1px; padding-left: 8px; }
.small .tabline { height: 22px; margin-bottom: 10px; }
.small .crumb { width: 62px; }
.small .viewer { padding: 41px 77px 41px 79px; }
.small .toolbar { padding: 0 1px; }
.small .toolbar button { width: 19px; }
.small .toolbar .time { width: 64px; }
.small .toolbar .zoom { width: 63px; }
.small .toolbar .cam { width: 99px; }
.small .toolbar .expo { margin-left: 4px; }
.small .toolbar .val { width: auto; }
.caption.last { height: 68px; }
```
